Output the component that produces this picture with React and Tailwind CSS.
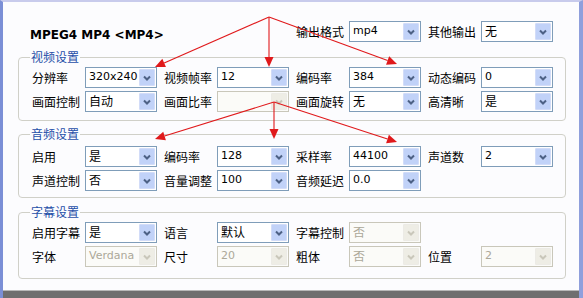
import React from 'react';

const cjk = /[\u4e00-\u9fff]/;

// XP style combo box
const Select = ({ value = '', disabled = false }) => {
  const isCjk = cjk.test(value);
  return (
    <div
      className={`flex h-[21px] w-[72px] items-center border ${
        disabled ? 'border-[#c9c7ba] bg-[#fbfbf8]' : 'border-[#7f9db9] bg-white'
      }`}
    >
      <span
        className={`flex-1 truncate pl-[3px] ${isCjk ? 'text-[12px]' : 'text-[11px]'} ${
          disabled ? 'text-[#aca899]' : 'text-black'
        }`}
        style={{ fontFamily: '"DejaVu Sans", "Noto Sans CJK SC", sans-serif' }}
      >
        {value}
      </span>
      <div
        className={`mr-px flex h-[17px] w-[16px] items-center justify-center rounded-[1px] border ${
          disabled ? 'border-[#ecebe6] bg-[#eeede5]' : 'border-[#d2dcf8] bg-[#c1d2f8]'
        }`}
      >
        <svg width="8" height="6" viewBox="0 0 8 6">
          <polyline
            points="1,1.5 4,4.5 7,1.5"
            fill="none"
            stroke={disabled ? '#c9c7ba' : '#4d6185'}
            strokeWidth="2"
          />
        </svg>
      </div>
    </div>
  );
};

const Field = ({ label, value, disabled }) => (
  <div className="flex w-[132px] items-center">
    <span className="w-[53px] text-[12px] text-black">{label}</span>
    <Select value={value} disabled={disabled} />
  </div>
);

const Row = ({ children }) => <div className="flex h-[21px] items-center">{children}</div>;

const Group = ({ title, children, className = '' }) => (
  <fieldset className={`ml-[15px] w-[548px] rounded-[4px] border border-[#d0d0c8] pl-[13px] ${className}`}>
    <legend className="-ml-[2px] px-[1px] text-[12px] leading-[14px] text-[#1f4fa8]">{title}</legend>
    <div className="flex flex-col gap-[3px]">{children}</div>
  </fieldset>
);

const Arrow = ({ x1, y1, x2, y2 }) => {
  const a = Math.atan2(y2 - y1, x2 - x1);
  const len = 10;
  const w = 4.5;
  const bx = x2 - len * Math.cos(a);
  const by = y2 - len * Math.sin(a);
  const px = -Math.sin(a) * w;
  const py = Math.cos(a) * w;
  return (
    <g>
      <line x1={x1} y1={y1} x2={bx} y2={by} stroke="#e0191b" strokeWidth="1.1" />
      <polygon points={`${x2},${y2} ${bx + px},${by + py} ${bx - px},${by - py}`} fill="#e0191b" />
    </g>
  );
};

export default function App() {
  return (
    <div
      className="relative flex h-[298px] w-[583px] flex-col border-t-2 border-r-4 border-l-[3px] border-t-[#c8cbec] border-r-[#8f9fdc] border-l-[#7b8fd6] bg-[#fcfcfe]"
      style={{ fontFamily: '"Noto Sans CJK SC", "DejaVu Sans", sans-serif' }}
    >
      <div className="flex-1">
        {/* header row */}
        <div className="mt-[19px] flex h-[21px] items-center pl-[29px]">
          <div className="w-[264px]">
            <span
              className="-ml-[2px] text-[12px] font-bold text-black"
              style={{ fontFamily: '"DejaVu Sans", sans-serif' }}
            >
              MPEG4 MP4 &lt;MP4&gt;
            </span>
          </div>
          <Field label="输出格式" value="mp4" />
          <Field label="其他输出" value="无" />
        </div>

        <Group title="视频设置" className="mt-[8px] pt-[3px] pb-[8px]">
          <Row>
            <Field label="分辨率" value="320x240" />
            <Field label="视频帧率" value="12" />
            <Field label="编码率" value="384" />
            <Field label="动态编码" value="0" />
          </Row>
          <Row>
            <Field label="画面控制" value="自动" />
            <Field label="画面比率" value="" disabled />
            <Field label="画面旋转" value="无" />
            <Field label="高清晰" value="是" />
          </Row>
        </Group>

        <Group title="音频设置" className="mt-[6px] pt-[5px] pb-[6px]">
          <Row>
            <Field label="启用" value="是" />
            <Field label="编码率" value="128" />
            <Field label="采样率" value="44100" />
            <Field label="声道数" value="2" />
          </Row>
          <Row>
            <Field label="声道控制" value="否" />
            <Field label="音量调整" value="100" />
            <Field label="音频延迟" value="0.0" />
          </Row>
        </Group>

        <Group title="字幕设置" className="mt-[7px] pt-[3px] pb-[11px]">
          <Row>
            <Field label="启用字幕" value="是" />
            <Field label="语言" value="默认" />
            <Field label="字幕控制" value="否" disabled />
          </Row>
          <Row>
            <Field label="字体" value="Verdana" disabled />
            <Field label="尺寸" value="20" disabled />
            <Field label="粗体" value="否" disabled />
            <Field label="位置" value="2" disabled />
          </Row>
        </Group>
      </div>

      {/* bottom status edge */}
      <div className="h-[8px] border-t border-t-[#b8b8b8] bg-[#6f6f6f]" />

      {/* annotation arrows */}
      <svg className="pointer-events-none absolute top-[-2px] left-[-3px]" width="583" height="298">
        <Arrow x1={269} y1={17} x2={155} y2={67} />
        <Arrow x1={269} y1={17} x2={269} y2={67} />
        <Arrow x1={269} y1={17} x2={397} y2={64} />
        <Arrow x1={274} y1={102} x2={155} y2={139} />
        <Arrow x1={274} y1={102} x2={274} y2={139} />
        <Arrow x1={274} y1={102} x2={397} y2={142} />
      </svg>
    </div>
  );
}
